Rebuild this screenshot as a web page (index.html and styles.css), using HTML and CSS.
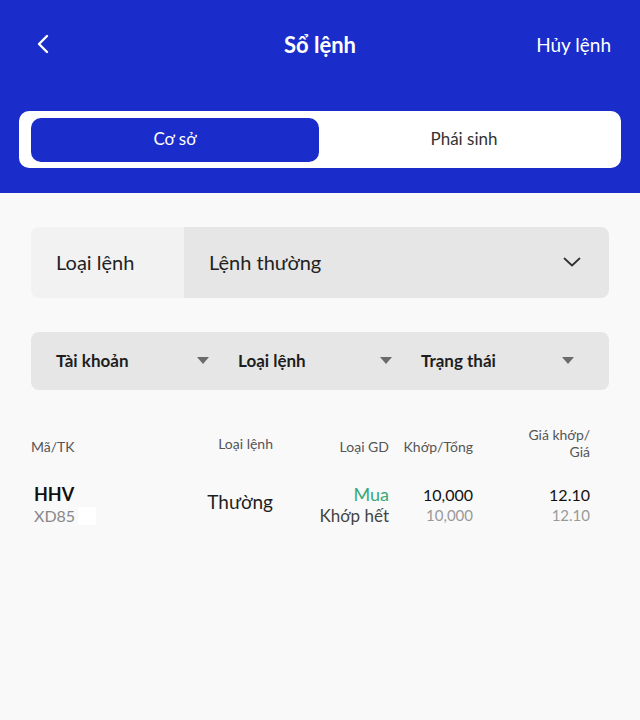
FILE: index.html
```html
<!DOCTYPE html>
<html lang="vi">
<head>
<meta charset="utf-8">
<link rel="stylesheet" href="styles.css">
</head>
<body>
<div class="app">
  <header class="header">
    <div class="topbar">
      <div class="back">
        <svg width="14" height="20" viewBox="0 0 14 20"><path d="M11 2 L3 10 L11 18" fill="none" stroke="#fff" stroke-width="2.4" stroke-linecap="round" stroke-linejoin="round"/></svg>
      </div>
      <div class="title">Sổ lệnh</div>
      <div class="cancel">Hủy lệnh</div>
    </div>
    <div class="tabs">
      <div class="tab active">Cơ sở</div>
      <div class="tab">Phái sinh</div>
    </div>
  </header>
  <main class="content">
    <div class="select">
      <div class="select-label">Loại lệnh</div>
      <div class="select-value">
        <span>Lệnh thường</span>
        <svg width="18" height="10" viewBox="0 0 18 10"><path d="M1.5 1.5 L9 8.5 L16.5 1.5" fill="none" stroke="#333" stroke-width="1.8" stroke-linecap="round" stroke-linejoin="round"/></svg>
      </div>
    </div>
    <div class="filters">
      <div class="filter"><span>Tài khoản</span><i class="tri"></i></div>
      <div class="filter"><span>Loại lệnh</span><i class="tri"></i></div>
      <div class="filter"><span>Trạng thái</span><i class="tri"></i></div>
    </div>
    <div class="table">
      <div class="thead">
        <div class="c1 h">Mã/TK</div>
        <div class="c2 h up">Loại lệnh</div>
        <div class="c3 h">Loại GD</div>
        <div class="c4 h">Khớp/Tổng</div>
        <div class="c5 h two">Giá khớp/<br>Giá</div>
      </div>
      <div class="trow">
        <div class="c1"><div class="sym">HHV</div><div class="acc">XD85<span class="mask"></span></div></div>
        <div class="c2 kind">Thường</div>
        <div class="c3"><div class="buy">Mua</div><div class="sub">Khớp hết</div></div>
        <div class="c4"><div class="main">10,000</div><div class="gray">10,000</div></div>
        <div class="c5"><div class="main">12.10</div><div class="gray">12.10</div></div>
      </div>
    </div>
  </main>
</div>
</body>
</html>
```

FILE: styles.css
```css
* { box-sizing: border-box; }
html, body { margin: 0; padding: 0; }
body {
  width: 640px;
  height: 720px;
  background: #f9f9f9;
  font-family: Lato, "Noto Sans", sans-serif;
  color: #1e1e1e;
}
.header {
  background: #1a2cc9;
  height: 193px;
  padding: 0 19px 25px;
}
.topbar {
  height: 88px;
  display: grid;
  grid-template-columns: 1fr auto 1fr;
  align-items: center;
  color: #fff;
}
.back { padding-left: 17px; display: flex; align-items: center; }
.title { font-size: 22px; font-weight: 700; }
.cancel { text-align: right; font-size: 19px; margin-right: 10px; }
.tabs {
  margin-top: 23px;
  height: 57px;
  background: #fff;
  border-radius: 10px;
  padding: 7px 12px 6px;
  display: grid;
  grid-template-columns: 288px 1fr;
}
.tab {
  display: flex;
  align-items: center;
  justify-content: center;
  font-size: 17px;
  color: #333;
  border-radius: 10px;
  padding-bottom: 3px;
}
.tab.active { background: #1a2cc9; color: #fff; }
.content { padding: 34px 31px 0; }
.select {
  height: 71px;
  border-radius: 8px;
  overflow: hidden;
  display: flex;
}
.select-label {
  width: 153px;
  background: #f2f2f2;
  display: flex;
  align-items: center;
  padding-left: 25px;
  font-size: 20px;
  color: #222;
  padding-bottom: 2px;
}
.select-value {
  flex: 1;
  background: #e6e6e6;
  display: flex;
  align-items: center;
  justify-content: space-between;
  padding: 0 28px 2px 25px;
  font-size: 20px;
  color: #222;
}
.filters {
  margin-top: 34px;
  height: 58px;
  background: #e6e6e6;
  border-radius: 8px;
  padding-left: 25px;
  display: grid;
  grid-template-columns: 182px 183px 182px;
}
.filter {
  display: flex;
  align-items: center;
  justify-content: space-between;
  padding-right: 29px;
  font-size: 17px;
  font-weight: 700;
  color: #1e1e1e;
  padding-bottom: 2px;
}
.tri {
  width: 0; height: 0;
  border-left: 6px solid transparent;
  border-right: 6px solid transparent;
  border-top: 7px solid #6b6b6b;
}
.table { margin-top: 36px; }
.thead, .trow {
  display: grid;
  grid-template-columns: 169px 73px 116px 84px 117px;
}
.thead { align-items: center; font-size: 14px; color: #555; }
.h { line-height: 17px; margin-top: 6px; }
.h.up { align-self: start; margin-top: 0; padding-top: 9px; }
.h.two { margin-top: 0; }
.c2, .c3, .c4, .c5 { text-align: right; }
.trow { margin-top: 24px; }
.sym { font-size: 18px; font-weight: 700; line-height: 21px; padding-left: 3px; color: #111; }
.acc { font-size: 16px; line-height: 21px; color: #888; padding-left: 3px; display: flex; align-items: center; }
.mask { display: inline-block; width: 18px; height: 18px; background: #fff; margin-left: 3px; }
.kind { align-self: center; font-size: 19px; color: #1e1e1e; margin-top: -8px; }
.buy { font-size: 18px; color: #3aa878; line-height: 21px; }
.sub { font-size: 17px; color: #444; line-height: 21px; }
.main { font-size: 16px; color: #111; line-height: 21px; }
.gray { font-size: 15px; color: #999; line-height: 21px; }
```
